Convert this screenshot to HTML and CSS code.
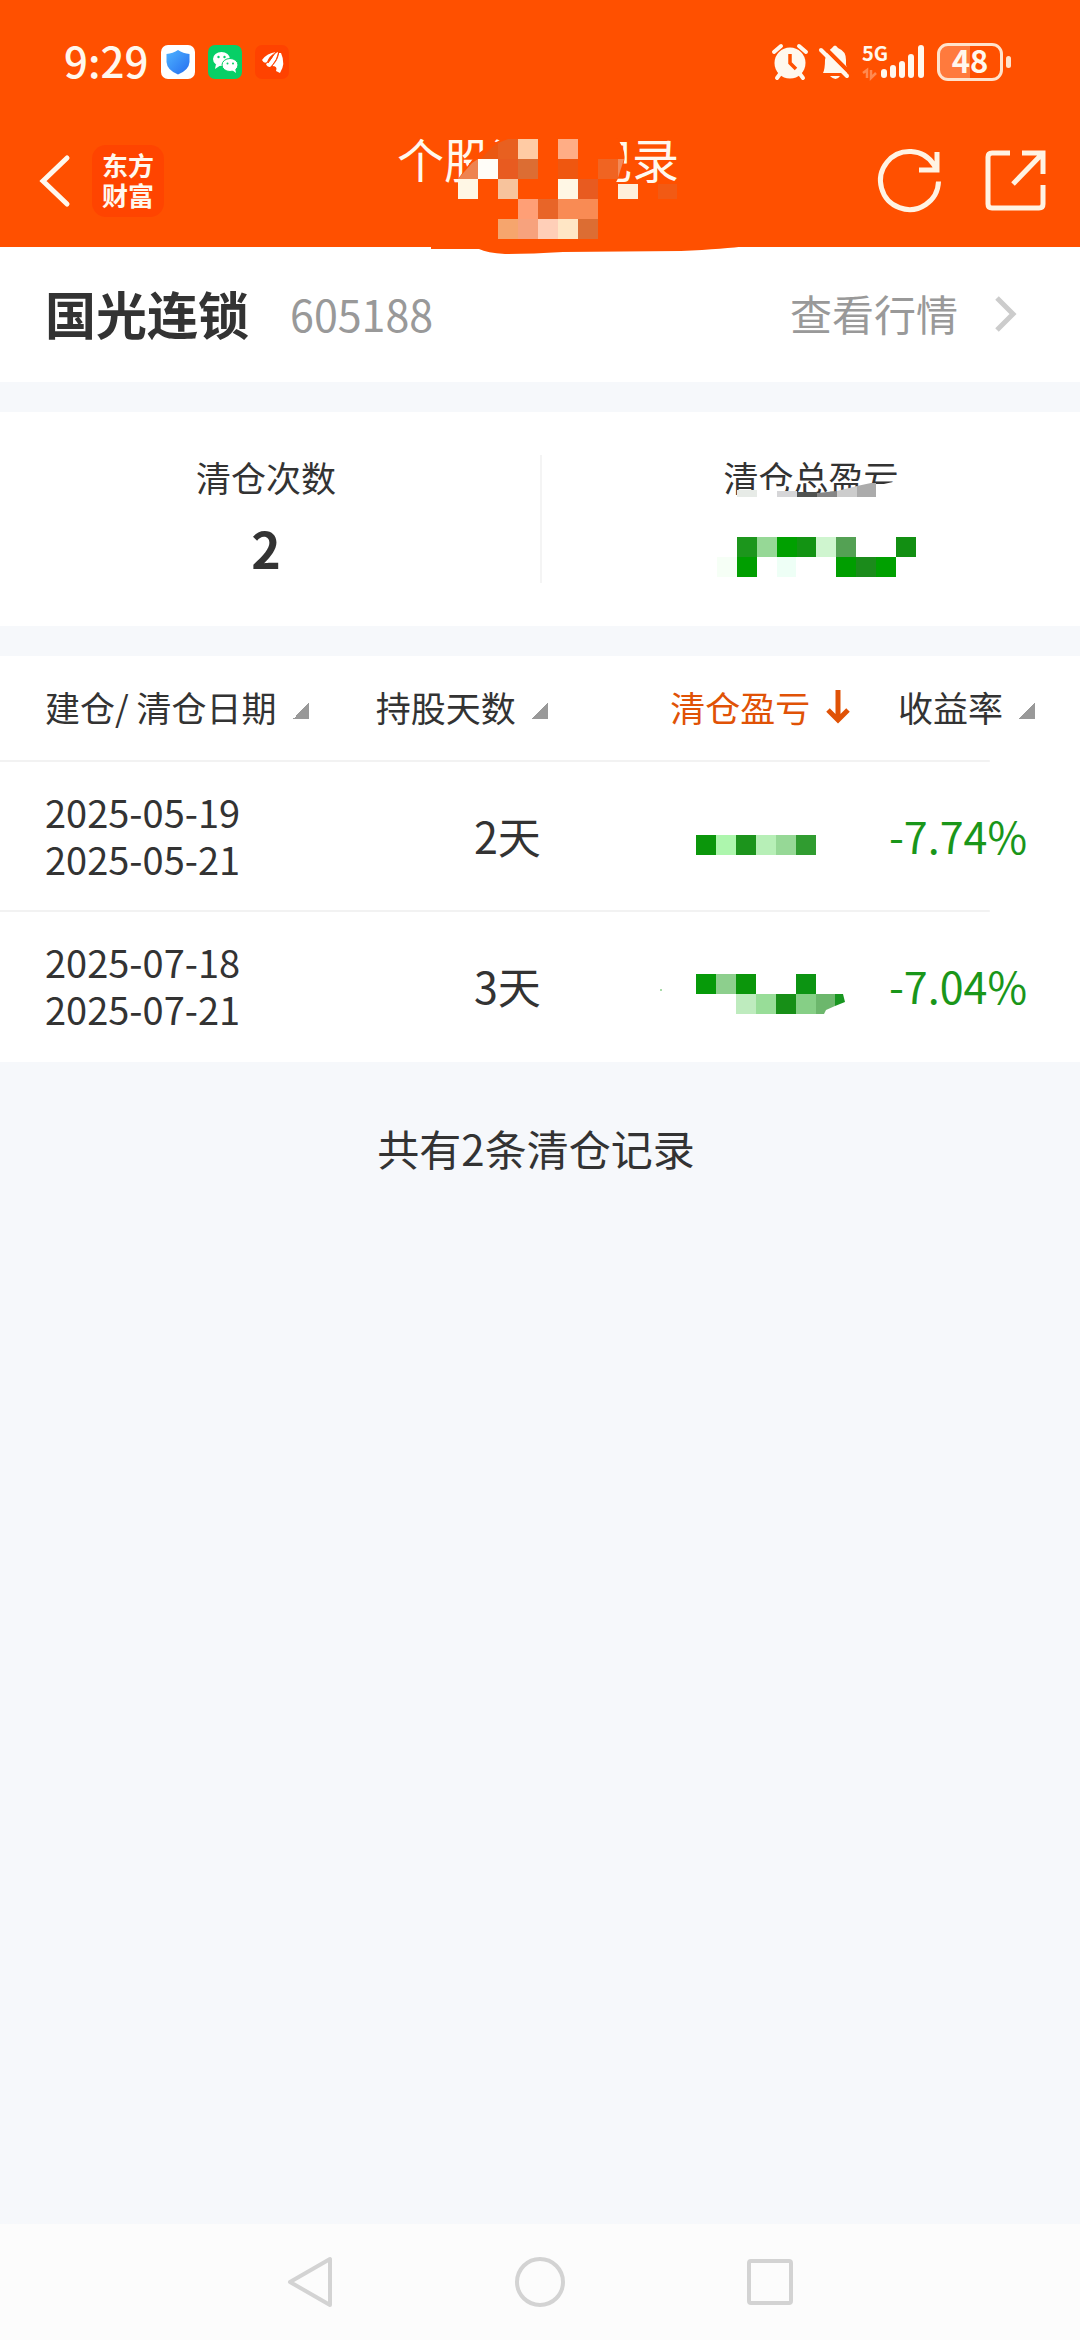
FILE: index.html
```html
<!DOCTYPE html>
<html lang="zh-CN">
<head>
<meta charset="utf-8">
<meta name="viewport" content="width=device-width">
<title>个股清仓记录</title>
<link rel="stylesheet" href="styles.css">
</head>
<body>
<div class="app">
  <header class="top">
    <div class="status">
      <span class="time">9:29</span>
      <svg class="app-icon" viewBox="0 0 34 34" aria-hidden="true">
        <defs><linearGradient id="shield" x1="0" y1="0" x2="1" y2="1"><stop offset="0" stop-color="#4fb4ff"/><stop offset="1" stop-color="#256df0"/></linearGradient></defs>
        <rect width="34" height="34" rx="7" fill="#fff"/>
        <path d="M17 5Q22 8.500 28.500 9V17Q28 25 17 29.500Q6 25 5.500 17V9Q12 8.500 17 5Z" fill="url(#shield)"/>
      </svg>
      <svg class="app-icon" viewBox="0 0 34 34" aria-hidden="true">
        <rect width="34" height="34" rx="7" fill="#07cf66"/>
        <ellipse cx="13.500" cy="14" rx="8.500" ry="7" fill="#fff"/><path d="M8 19L7 24L13 20Z" fill="#fff"/>
        <ellipse cx="22" cy="20" rx="8" ry="6.500" fill="#fff" stroke="#07cf66"/><path d="M24 25L28 28L27 23Z" fill="#fff"/>
        <g fill="#07cf66"><circle cx="10.500" cy="12" r="1.200"/><circle cx="16.500" cy="12" r="1.200"/><circle cx="19.500" cy="18.500" r="1"/><circle cx="25" cy="18.500" r="1"/></g>
      </svg>
      <svg class="app-icon" viewBox="0 0 34 34" aria-hidden="true">
        <rect width="34" height="34" rx="7" fill="#ff4200"/>
        <path d="M7 15Q12 8 21 7Q14 11 12 17Q9 19 7 15ZM11 19Q17 15 19 9L23 7Q23 16 15 22Q12 22 11 19ZM17 21Q23 16 24 8L26 8Q31 19 25 28L21 26Q23 21 17 21Z" fill="#fff"/>
        <path d="M13 18Q17 12 21 7M17 21Q22 15 24 7" fill="none" stroke="#ff4200"/>
      </svg>
      <div class="status-right">
        <svg class="alarm" viewBox="0 0 36 36" aria-hidden="true">
          <circle cx="18" cy="19" r="15.500" fill="#fff8ee"/>
          <path d="M2 8L9 2M34 8L27 2M8 30L5 34M28 30L31 34" stroke="#fff8ee" stroke-width="4" stroke-linecap="round"/>
          <path d="M18 10V19L24 25" fill="none" stroke="#ff5000" stroke-width="3.500"/>
        </svg>
        <svg class="bell" viewBox="0 0 32 36" aria-hidden="true">
          <path d="M4 29Q6 25 6 16Q7 8 13 4Q16-1 19 4Q27 7 27 16V21L30 29Z" fill="#fff8ee"/>
          <path d="M11 32H21Q17 38 11 32Z" fill="#fff8ee"/>
          <path d="M5 3L32 30" stroke="#ff5000" stroke-width="4"/><path d="M2 6L28 32" stroke="#fff8ee" stroke-width="4" stroke-linecap="round"/>
        </svg>
        <div class="signal">
          <span class="net">5G</span>
          <svg viewBox="0 0 64 36" aria-hidden="true">
            <path d="M5 34V26L1 29M9 26V34L14 29" fill="none" stroke="#ff8a50" stroke-width="2.500"/>
            <path d="M22 28V31M31 24V31M40 20V31M49 13V31M59 4V31" stroke="#fff8ee" stroke-width="6" stroke-linecap="round"/>
          </svg>
        </div>
        <div class="battery"><span>48</span></div>
      </div>
    </div>
    <div class="bar">
      <div class="bar-left">
        <button class="icon-btn" aria-label="返回"><svg class="back" viewBox="0 0 44 56"><path d="M39 5L15 28L39 51" fill="none" stroke="#fff8ee" stroke-width="5" stroke-linecap="round"/></svg></button>
        <a class="logo" href="#">东方<br>财富</a>
      </div>
      <h1 class="title">个股清仓记录
        <svg class="title-mask" viewBox="396 123 360 132" aria-hidden="true">
          <path d="M457 179L474 156Q500 136 516 136H614Q626 150 623 162Q618 178 614 184L610 200H457Z" fill="#ff5000"/>
          <path d="M430 245V249H478Q486 253 504 254Q530 254 562 252L680 251Q725 249 745 246V245Z" fill="#ff5000"/>
          <path d="M480 159Q490 147 497 143V159Z" fill="#ea5812"/><path d="M457 179L471 163L477 159V179Z" fill="#ee8350"/>
          <path d="M497 159V143L507 139H517V159Z" fill="#e86020"/><path d="M517 139h20v20h-20z" fill="#ffcba4"/><path d="M557 139h20v20h-20z" fill="#ffad85"/>
          <path d="M477 159h20v20h-20z" fill="#fffdf8"/><path d="M497 159h20v20h-20z" fill="#e85b20"/><path d="M517 159h20v20h-20z" fill="#dc6d33"/><path d="M557 159h20v20h-20z" fill="#ef5710"/><path d="M597 159h20v20h-20z" fill="#f06422"/><path d="M617 159H623L617 178Z" fill="#f38a59"/>
          <path d="M457 179h20v20h-20z" fill="#fff7e5"/><path d="M497 179h20v20h-20z" fill="#f7c39c"/><path d="M557 179h20v20h-20z" fill="#fff7e5"/><path d="M577 179h20v20h-20z" fill="#e85b20"/><path d="M617 184h20v15h-20z" fill="#ffefda"/><path d="M657 184h19v15h-19z" fill="#f25a14"/>
          <path d="M517 199h20v20h-20z" fill="#ff9f76"/><path d="M537 199h20v20h-20z" fill="#e86528"/><path d="M557 199h40v20h-40z" fill="#f98b54"/>
          <path d="M497 219h20v20h-20z" fill="#f6a56d"/><path d="M517 219h20v20h-20z" fill="#f7a27d"/><path d="M537 219h20v20h-20z" fill="#ffcfb8"/><path d="M557 219h20v20h-20z" fill="#ffe6c5"/><path d="M577 219h20v20h-20z" fill="#dc6d33"/>
        </svg>
      </h1>
      <div class="bar-right">
        <button class="icon-btn" aria-label="刷新"><svg class="tool" viewBox="0 0 64 64"><path d="M60.500 32.500A29 29 0 1 1 56 16L59 22M59 3V21H41" fill="none" stroke="#fff3e3" stroke-width="5"/></svg></button>
        <button class="icon-btn" aria-label="分享"><svg class="tool" viewBox="0 0 64 64"><path d="M26 4H8Q4 4 4 8V55Q4 59 8 59H55Q59 59 59 55V36M38 4H59V25M59 4L29 35" fill="none" stroke="#fff3e3" stroke-width="5"/></svg></button>
      </div>
    </div>
  </header>

  <main>
    <section class="stock">
      <h2>国光连锁</h2>
      <span class="code">605188</span>
      <a class="quote" href="#">查看行情
        <svg class="chevron" viewBox="0 0 24 36" aria-hidden="true"><path d="M3 3L19 19L3 35" fill="none" stroke="#ccc" stroke-width="5"/></svg>
      </a>
    </section>

    <section class="summary">
      <div class="stat">
        <span class="stat-label">清仓次数</span>
        <strong>2</strong>
      </div>
      <div class="stat">
        <span class="stat-label">清仓总盈亏
          <svg class="total-mask" viewBox="716 480 200 100" aria-hidden="true">
            <path d="M836 497V493Q870 487 892 482H896V500Z" fill="#fff"/>
            <path d="M736 490h20v7h-20z" fill="#e7ebe7"/><path d="M756 490h20v7h-20z" fill="#fff"/><path d="M776 491h20v6h-20z" fill="#d6d6d8"/><path d="M796 492h20v5h-20z" fill="#505250"/><path d="M816 493L836 491V497H816Z" fill="#868686"/><path d="M836 491L856 486V497H836Z" fill="#ccc"/><path d="M856 486L870 483H875V497H856Z" fill="#ababab"/>
            <path d="M736 537h20v20h-20z" fill="#1c961c"/><path d="M756 537h20v20h-20z" fill="#96d896"/><path d="M776 537h20v20h-20z" fill="#00a000"/><path d="M796 537h19v20h-19z" fill="#139313"/><path d="M815 537h20v20h-20z" fill="#cff5cf"/><path d="M835 537h20v20h-20z" fill="#54a154"/><path d="M895 537h20v20h-20z" fill="#128f12"/>
            <path d="M716 557h20v20h-20z" fill="#f6fff6"/><path d="M736 557h20v20h-20z" fill="#009e00"/><path d="M776 557h19v20h-19z" fill="#eefff6"/><path d="M835 557h20v20h-20z" fill="#009e00"/><path d="M855 557h20v20h-20z" fill="#1b8b1b"/><path d="M875 557h20v20h-20z" fill="#00a000"/>
          </svg>
        </span>
      </div>
    </section>

    <table class="records">
      <colgroup><col class="c-date"><col class="c-days"><col class="c-profit"><col class="c-rate"></colgroup>
      <thead>
        <tr>
          <th scope="col"><button class="sort">建仓/ 清仓日期<i class="tri"></i></button></th>
          <th scope="col"><button class="sort">持股天数<i class="tri"></i></button></th>
          <th scope="col"><button class="sort active">清仓盈亏<svg class="arrow" viewBox="0 0 24 34" aria-hidden="true"><path d="M12 0V30M2 20L12 30L22 20" fill="none" stroke="#e05206" stroke-width="5"/></svg></button></th>
          <th scope="col"><button class="sort">收益率<i class="tri"></i></button></th>
        </tr>
      </thead>
      <tbody>
        <tr>
          <td class="dates">2025-05-19<br>2025-05-21</td>
          <td class="days">2天</td>
          <td class="profit"><svg viewBox="696 807 150 60" aria-hidden="true"><path d="M696 835h20v20h-20z" fill="#0b960b"/><path d="M716 835h20v20h-20z" fill="#adf6ad"/><path d="M736 835h20v20h-20z" fill="#1c941c"/><path d="M756 835h20v20h-20z" fill="#b7efb7"/><path d="M776 835h20v20h-20z" fill="#96d896"/><path d="M796 835h20v20h-20z" fill="#309c30"/></svg></td>
          <td class="rate">-7.74%</td>
        </tr>
        <tr>
          <td class="dates">2025-07-18<br>2025-07-21</td>
          <td class="days">3天</td>
          <td class="profit"><svg viewBox="696 957 150 60" aria-hidden="true"><path d="M696 974h20v20h-20z" fill="#069a09"/><path d="M716 974h20v20h-20z" fill="#8dcf8d"/><path d="M736 974h20v20h-20z" fill="#0b960b"/><path d="M796 974h20v20h-20z" fill="#0c9412"/><path d="M736 994h20v20h-20z" fill="#beebbe"/><path d="M756 994h20v20h-20z" fill="#98dd98"/><path d="M776 994h20v20h-20z" fill="#178f17"/><path d="M796 994h20v20h-20z" fill="#86cf86"/><path d="M816 994H835V1006L826 1010L824 1014H816Z" fill="#6cb76c"/><path d="M835 994H843L845 1002L835 1006Z" fill="#189620"/><circle cx="661" cy="990" r="1" fill="#8dcf8d"/></svg></td>
          <td class="rate">-7.04%</td>
        </tr>
      </tbody>
    </table>
    <p class="total">共有2条清仓记录</p>
  </main>

  <nav class="sysnav">
    <button class="icon-btn" aria-label="返回键"><svg viewBox="0 0 52 52"><path d="M46 3V49L6 26Z" fill="none" stroke="#d3d3d3" stroke-width="4" stroke-linejoin="round"/></svg></button>
    <button class="icon-btn" aria-label="主屏幕"><svg viewBox="0 0 52 52"><circle cx="26" cy="26" r="23" fill="none" stroke="#d3d3d3" stroke-width="4"/></svg></button>
    <button class="icon-btn" aria-label="最近任务"><svg viewBox="0 0 52 52"><rect x="5" y="5" width="42" height="42" rx="2" fill="none" stroke="#d3d3d3" stroke-width="4"/></svg></button>
  </nav>
</div>
</body>
</html>
```
FILE: styles.css
```css
* { box-sizing: border-box; }
body {
  margin: 0;
  background: #f6f8fb;
  color: #333;
  font-family: "Noto Sans CJK SC", sans-serif;
}
svg { display: block; overflow: visible; }
h1, h2, p { margin: 0; }
button {
  border: 0;
  padding: 0;
  background: none;
  color: inherit;
  font: inherit;
}
a { color: inherit; text-decoration: none; }
.app { display: flex; flex-direction: column; min-height: 100vh; }

/* header */
.top { background: #ff5000; color: #fff8ee; }
.status {
  display: flex;
  align-items: center;
  gap: 13px;
  height: 123px;
  padding: 0 77px 0 64px;
}
.time { padding-bottom: 4px; font-size: 42px; font-weight: 500; line-height: 48px; }
.app-icon { width: 34px; height: 34px; }
.status-right { display: flex; align-items: center; gap: 11px; margin-left: auto; }
.alarm { width: 36px; height: 36px; }
.bell { width: 32px; height: 36px; }
.signal { position: relative; }
.signal svg { width: 64px; height: 36px; }
.net {
  position: absolute;
  top: -1px;
  left: 0;
  font-size: 20px;
  font-weight: 700;
  line-height: 20px;
}
.battery {
  position: relative;
  width: 66px;
  height: 38px;
  border: 3px solid #ffe3cc;
  border-radius: 11px;
  background: linear-gradient(90deg, #ff7a3d 50%, #ff5000 50%);
  font-size: 31px;
  font-weight: 700;
  line-height: 28px;
  text-align: center;
}
.battery::after {
  content: "";
  position: absolute;
  top: 10px;
  right: -11px;
  width: 5px;
  height: 12px;
  border-radius: 3px;
  background: #ffe3cc;
}
.bar {
  display: grid;
  grid-template-columns: 1fr auto 1fr;
  align-items: center;
  height: 124px;
  padding: 0 32px 8px 28px;
}
.bar-left { display: flex; align-items: center; gap: 20px; }
.back { width: 44px; height: 56px; }
.logo {
  width: 72px;
  height: 72px;
  padding-top: 5px;
  border-radius: 14px;
  background: #ff4400;
  font-size: 26px;
  font-weight: 700;
  line-height: 30px;
  text-align: center;
}
.title {
  position: relative;
  align-self: start;
  font-size: 47px;
  font-weight: 400;
  line-height: 70px;
}
.title-mask { position: absolute; top: 0; left: 0; width: 360px; height: 132px; }
.bar-right { display: flex; justify-content: flex-end; gap: 42px; }
.tool { width: 64px; height: 64px; }

/* stock */
.stock {
  display: flex;
  align-items: center;
  height: 135px;
  padding: 0 62px 4px 45px;
  background: #fff;
}
.stock h2 { font-size: 51px; font-weight: 700; line-height: 72px; }
.code { margin-left: 41px; color: #999; font-size: 43px; line-height: 64px; }
.quote {
  display: flex;
  align-items: center;
  gap: 36px;
  margin-left: auto;
  color: #999;
  font-size: 42px;
  line-height: 64px;
}
.chevron { width: 24px; height: 36px; }

/* summary */
.summary {
  display: grid;
  grid-template-columns: 1fr 1fr;
  height: 214px;
  margin: 30px 0;
  padding: 43px 0;
  background: #fff;
}
.stat { display: flex; flex-direction: column; align-items: center; }
.stat:first-child { padding-right: 8px; }
.stat:last-child { border-left: 2px solid #f4f4f4; }
.stat-label { position: relative; font-size: 35px; line-height: 44px; }
.stat strong { margin-top: 12px; font-size: 50px; line-height: 72px; }
.total-mask { position: absolute; top: 25px; left: -6px; width: 200px; height: 100px; }

/* records */
.records {
  width: 100%;
  table-layout: fixed;
  border-collapse: collapse;
  background: #fff;
}
.c-date { width: 30%; }
.c-days { width: 21%; }
.c-profit { width: 28%; }
.c-rate { width: 21%; }
.records th { height: 106px; padding: 0 0 4px; font-weight: 400; text-align: right; }
.records th:first-child { padding-left: 45px; text-align: left; }
.records th:nth-child(2) { padding-right: 3px; }
.records th:nth-child(3) { padding-right: 3px; }
.records th:last-child { padding-right: 45px; }
.records tr {
  background: linear-gradient(#f2f2f2, #f2f2f2) left bottom / calc(100% - 90px) 2px no-repeat;
}
.records tbody tr:last-child { background: none; }
.sort {
  display: inline-flex;
  align-items: center;
  gap: 16px;
  font-size: 35px;
  line-height: 48px;
  white-space: nowrap;
}
.active { color: #e05206; }
.tri {
  width: 16px;
  height: 16px;
  margin-top: 8px;
  background: linear-gradient(135deg, transparent 50%, #999 50%);
}
.arrow { width: 24px; height: 34px; }
.records td { height: 150px; padding: 0 0 4px; }
.records .dates { padding-left: 45px; font-size: 38px; line-height: 47px; }
.records .days { padding-right: 10px; font-size: 43px; text-align: right; }
.records .profit { padding-bottom: 0; padding-left: 145px; }
.profit svg { width: 150px; height: 60px; }
.records .rate { padding-right: 53px; color: #1a961a; font-size: 43px; text-align: right; }
.total { padding: 54px 8px 54px 0; font-size: 42px; line-height: 64px; text-align: center; }

/* system navigation */
.sysnav {
  display: flex;
  justify-content: center;
  align-items: center;
  gap: 178px;
  height: 116px;
  margin-top: auto;
  background: #fcfcfc;
}
.sysnav svg { width: 52px; height: 52px; }
```
